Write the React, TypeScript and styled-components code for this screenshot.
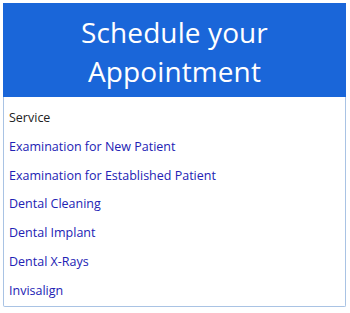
import { createGlobalStyle, styled } from "styled-components"

const GlobalStyle = createGlobalStyle`
  html, body {
    margin: 0;
    padding: 0;
    background: #ffffff;
    font-family: "Open Sans", "Noto Sans", sans-serif;
  }
`

const Card = styled.div`
  margin: 3px 3px 0 3px;
  width: 343px;
  border: 1px solid #a9c3e4;
  border-top: none;
  border-radius: 0 0 2px 2px;
  box-sizing: border-box;
  background: #fff;
`

const Header = styled.div`
  background: #1a66d9;
  color: #ffffff;
  text-align: center;
  font-size: 28px;
  line-height: 39px;
  letter-spacing: 0.1px;
  padding: 10px 0 6px;
  margin: 0 -1px;
`

const List = styled.ul`
  list-style: none;
  margin: 0;
  padding: 7px 0 0 5px;
`

const Item = styled.li<{ $muted?: boolean }>`
  font-size: 12.5px;
  line-height: 28.8px;
  font-weight: ${(p) => (p.$muted ? 400 : 500)};
  color: ${(p) => (p.$muted ? "#222222" : "#2222b4")};
`

const services = [
  "Examination for New Patient",
  "Examination for Established Patient",
  "Dental Cleaning",
  "Dental Implant",
  "Dental X-Rays",
  "Invisalign",
]

export default function App() {
  return (
    <>
      <GlobalStyle />
      <Card>
        <Header>
          Schedule your
          <br />
          Appointment
        </Header>
        <List>
          <Item $muted>Service</Item>
          {services.map((s) => (
            <Item key={s}>{s}</Item>
          ))}
        </List>
      </Card>
    </>
  )
}
